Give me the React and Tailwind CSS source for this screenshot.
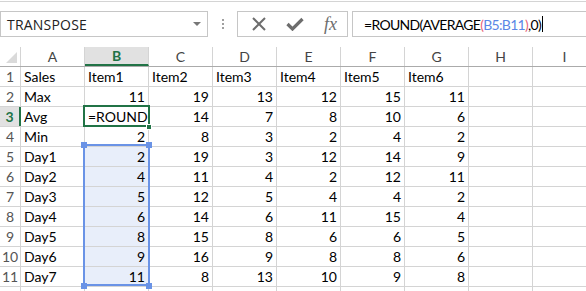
const cols = ['A', 'B', 'C', 'D', 'E', 'F', 'G', 'H', 'I'];

const rows = [
  ['Sales', 'Item1', 'Item2', 'Item3', 'Item4', 'Item5', 'Item6'],
  ['Max', 11, 19, 13, 12, 15, 11],
  ['Avg', '=ROUND(A', 14, 7, 8, 10, 6],
  ['Min', 2, 8, 3, 2, 4, 2],
  ['Day1', 2, 19, 3, 12, 14, 9],
  ['Day2', 4, 11, 4, 2, 12, 11],
  ['Day3', 5, 12, 5, 4, 4, 2],
  ['Day4', 6, 14, 6, 11, 15, 4],
  ['Day5', 8, 15, 8, 6, 6, 5],
  ['Day6', 9, 16, 9, 8, 8, 6],
  ['Day7', 11, 8, 13, 10, 9, 8],
];

function Cell({ value, inRange }) {
  const isNum = typeof value === 'number';
  return (
    <div
      className={`w-[64px] shrink-0 h-full border-r border-[#d4d4d4] flex items-center overflow-hidden whitespace-nowrap ${
        isNum ? 'justify-end pr-[3px]' : 'pl-[3px]'
      } ${inRange ? 'bg-[#e8eefa]' : ''}`}
    >
      {value}
    </div>
  );
}

export default function App() {
  return (
    <div className="w-[586px] h-[291px] overflow-hidden bg-white relative font-['Lato',sans-serif] text-[15px] text-black">
      <div className="h-[2px] border-b border-[#d4d4d4]" />

      {/* formula bar */}
      <div className="flex items-center mt-[9px] h-[26px]">
        <div className="w-[208px] h-full border border-[#c6c6c6] flex items-center pl-[6px] pr-[6px] shrink-0">
          <span className="flex-1 font-['Open_Sans',sans-serif] text-[14px] text-[#222] tracking-[0.2px]">TRANSPOSE</span>
          <span className="w-0 h-0 border-l-[4px] border-r-[4px] border-t-[4px] border-l-transparent border-r-transparent border-t-[#777]" />
        </div>
        <div className="w-[29px] flex flex-col items-center gap-[2px] shrink-0">
          <span className="w-[2px] h-[2px] bg-[#a0a0a0]" />
          <span className="w-[2px] h-[2px] bg-[#a0a0a0]" />
          <span className="w-[2px] h-[2px] bg-[#a0a0a0]" />
        </div>
        <div className="w-[111px] h-full border border-[#c6c6c6] flex items-center shrink-0">
          <div className="w-[42px] flex justify-center">
            <svg width="14" height="14" viewBox="0 0 14 14">
              <path d="M1 1 L13 13 M13 1 L1 13" stroke="#6d6d6d" strokeWidth="2" />
            </svg>
          </div>
          <div className="w-[30px] flex justify-center">
            <svg width="18" height="14" viewBox="0 0 18 14">
              <path d="M1.5 7 L6.5 12 L16.5 2" stroke="#6d6d6d" strokeWidth="3.2" fill="none" />
            </svg>
          </div>
          <div className="flex-1 flex justify-center pl-[4px]">
            <span className="font-['Liberation_Serif',serif] italic text-[18px] text-[#6d6d6d] leading-none">fx</span>
          </div>
        </div>
        <div className="ml-[4px] w-[260px] h-full border border-[#c6c6c6] flex items-center pl-[11px] shrink-0 text-[14px] tracking-[-0.7px]">
          <span className="whitespace-nowrap">
            =ROUND(AVERAGE<span className="text-[#e8637a]">(</span>
            <span className="text-[#5b86e5]">B5:B11</span>
            <span className="text-[#e8637a]">)</span>,0)
          </span>
          <span className="w-[1px] h-[16px] bg-black ml-[1px]" />
        </div>
      </div>

      {/* grid */}
      <div className="mt-[10px] text-[14px]">
        <div className="flex h-[20px] border-b border-[#ababab] text-[#444] text-[14px]">
          <div className="w-[21px] shrink-0 h-full border-r border-[#d4d4d4] relative">
            <svg className="absolute right-[3px] bottom-[3px]" width="11" height="11" viewBox="0 0 11 11">
              <path d="M11 0 L11 11 L0 11 Z" fill="#dadada" />
            </svg>
          </div>
          {cols.map((c) => (
            <div
              key={c}
              className={`w-[64px] shrink-0 h-full border-r border-[#d4d4d4] flex items-center justify-center ${
                c === 'B' ? 'bg-[#e1e1e1] text-[#217346] font-bold border-b-2 border-b-[#217346]' : ''
              }`}
            >
              {c}
            </div>
          ))}
        </div>

        {rows.map((r, i) => {
          const active = i === 2;
          return (
            <div key={i} className="flex h-[20px] border-b border-[#d4d4d4]">
              <div
                className={`w-[21px] shrink-0 h-full flex items-center justify-center text-[14px] ${
                  active
                    ? 'bg-[#e1e1e1] text-[#217346] font-bold border-r-2 border-[#217346]'
                    : 'text-[#555] border-r border-[#d4d4d4]'
                }`}
              >
                {i + 1}
              </div>
              {r.map((v, j) => (
                <Cell key={j} value={v} inRange={j === 1 && i >= 4} />
              ))}
              <Cell value="" />
              <Cell value="" />
            </div>
          );
        })}
        <div className="flex h-[20px]">
          <div className="w-[21px] shrink-0 h-full border-r border-[#d4d4d4]" />
          {cols.map((c) => (
            <div key={c} className="w-[64px] shrink-0 h-full border-r border-[#d4d4d4]" />
          ))}
        </div>
      </div>

      {/* active cell B3 */}
      <div className="absolute left-[83px] top-[105px] w-[67px] h-[22px] border-2 border-[#217346]" />
      <div className="absolute left-[146px] top-[124px] w-[6px] h-[6px] bg-[#217346] border border-white" />

      {/* range B5:B11 */}
      <div className="absolute left-[83px] top-[144px] w-[67px] h-[142px] border-2 border-[#6a93e6]" />
      <div className="absolute left-[81px] top-[142px] w-[6px] h-[6px] bg-[#6a93e6]" />
      <div className="absolute left-[146px] top-[142px] w-[6px] h-[6px] bg-[#6a93e6]" />
      <div className="absolute left-[81px] top-[283px] w-[6px] h-[6px] bg-[#6a93e6]" />
      <div className="absolute left-[146px] top-[283px] w-[6px] h-[6px] bg-[#6a93e6]" />
    </div>
  );
}
